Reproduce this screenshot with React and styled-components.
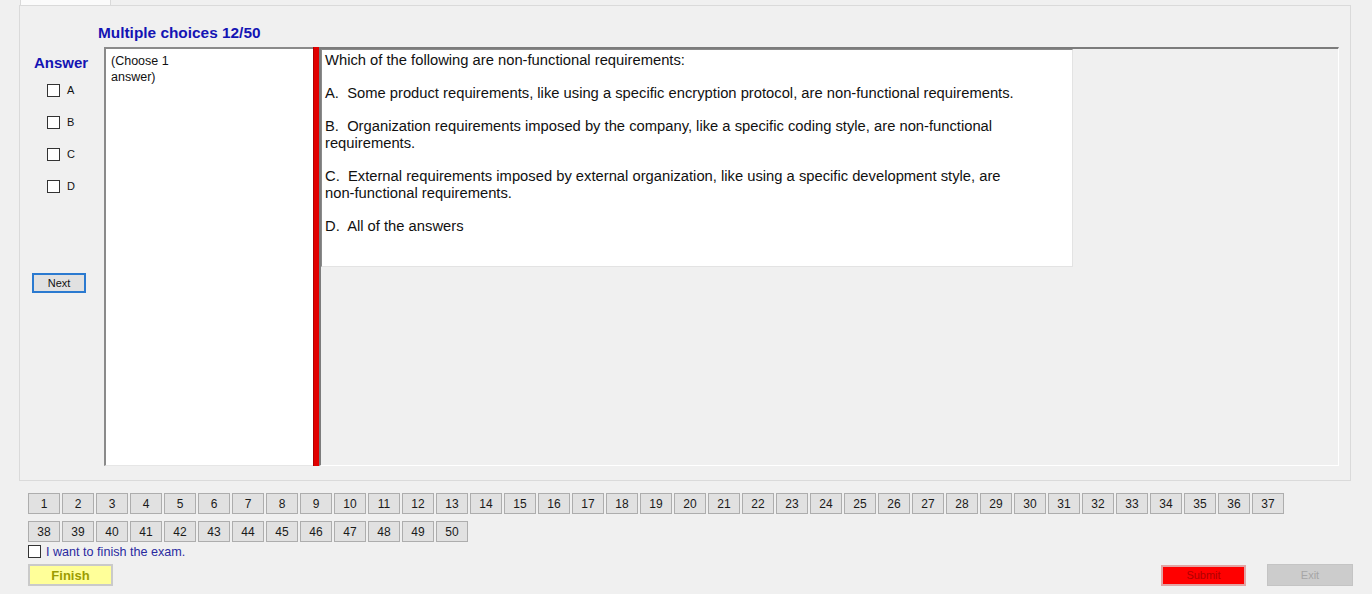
import React, { useState } from 'react';
import styled, { createGlobalStyle } from 'styled-components';

// --- Global ---
const GlobalStyle = createGlobalStyle`
  html, body { margin: 0; padding: 0; background: #f0f0f0; }
  body { font-family: 'Liberation Sans', Arial, sans-serif; }
  * { box-sizing: border-box; }
`;

const Screen = styled.div`
  width: 1372px;
  height: 594px;
  overflow: hidden;
  background: #f0f0f0;
  display: flex;
  flex-direction: column;
`;

// --- Tab control ---
const TabStrip = styled.div`
  height: 5px;
  padding-left: 20px;
  display: flex;
`;

const Tab = styled.div`
  width: 91px;
  height: 6px;
  background: #fbfbfb;
  border-left: 1px solid #d9d9d9;
  border-right: 1px solid #d9d9d9;
`;

const TabPage = styled.div`
  margin-left: 19px;
  width: 1332px;
  height: 476px;
  border: 1px solid #dadada;
  padding: 18px 11px 14px 0;
  display: flex;
  flex-direction: column;
`;

const Title = styled.div`
  margin-left: 78px;
  height: 17px;
  line-height: 17px;
  font-size: 15.4px;
  font-weight: 700;
  color: #1414b4;
`;

const MainRow = styled.div`
  margin-top: 6px;
  height: 419px;
  display: flex;
`;

// --- Answer column ---
const AnswerCol = styled.div`
  width: 84px;
  padding-left: 12px;
  display: flex;
  flex-direction: column;
`;

const AnswerLabel = styled.div`
  margin: 7px 0 3px 2px;
  height: 17px;
  line-height: 17px;
  font-size: 15px;
  font-weight: 700;
  color: #1414b4;
`;

const OptionRow = styled.label`
  height: 32px;
  padding-left: 15px;
  display: flex;
  align-items: center;
  gap: 7px;
  font-size: 11px;
  color: #111;
`;

const Box = styled.input.attrs({ type: 'checkbox' })`
  appearance: none;
  margin: 0;
  width: 13px;
  height: 13px;
  flex: none;
  background: #fff;
  border: 1px solid #333;
  &:checked { background: #fff radial-gradient(circle, #333 30%, transparent 32%); }
`;

const NextButton = styled.button`
  margin-top: 71px;
  width: 54px;
  height: 20px;
  padding: 0;
  background: #e1e1e1;
  border: 2px solid #2b7ad0;
  font-family: inherit;
  font-size: 11px;
  color: #111;
`;

// --- Choose box, red bar, question panel ---
const ChooseBox = styled.div`
  width: 209px;
  background: #fff;
  border-top: 2px solid #8a8a8a;
  border-left: 2px solid #8a8a8a;
  border-bottom: 1px solid #e6e6e6;
  padding: 5px 0 0 5px;
  font-size: 12.5px;
  line-height: 15.5px;
  color: #111;
`;

const RedBar = styled.div`
  width: 6px;
  background: #e10000;
  border-left: 1px solid #b00000;
`;

const QuestionPanel = styled.div`
  width: 1020px;
  border-top: 2px solid #7c7c7c;
  border-left: 2px solid #7c7c7c;
  border-right: 1px solid #fff;
  border-bottom: 1px solid #fff;
`;

const QuestionText = styled.div`
  width: 752px;
  height: 218px;
  background: #fff;
  border-top: 1px solid #8a8a8a;
  border-left: 1px solid #8a8a8a;
  border-right: 1px solid #e3e3e3;
  border-bottom: 1px solid #e3e3e3;
  padding: 2px 0 0 3px;
  font-size: 14.75px;
  line-height: 16.6px;
  color: #111;
  white-space: nowrap;

  p { margin: 0 0 16.6px; }
`;

// --- Navigation ---
const NavGrid = styled.div`
  margin: 12px 0 0 28px;
  width: 1260px;
  display: flex;
  flex-wrap: wrap;
  gap: 7px 2px;
`;

const NumButton = styled.button`
  width: 32px;
  height: 21px;
  padding: 0;
  background: #e1e1e1;
  border: 1px solid #adadad;
  font-family: inherit;
  font-size: 12px;
  color: #1a1a1a;
`;

const ConfirmRow = styled.label`
  margin: 2px 0 0 28px;
  height: 15px;
  display: flex;
  align-items: center;
  gap: 5px;
  font-size: 12.6px;
  color: #2a2aa0;
`;

const BottomRow = styled.div`
  margin-top: 5px;
  padding: 0 19px 0 28px;
  display: flex;
  justify-content: space-between;
  align-items: center;
`;

const FinishButton = styled.button`
  width: 85px;
  height: 22px;
  padding: 0;
  background: #ffff99;
  border: 2px solid #cacaca;
  font-family: inherit;
  font-size: 13px;
  font-weight: 700;
  color: #9c9c00;
`;

const RightButtons = styled.div`
  display: flex;
  align-items: center;
  gap: 21px;
`;

const SubmitButton = styled.button`
  width: 85px;
  height: 21px;
  padding: 0;
  background: #ff0000;
  border: 2px solid #e2a4a4;
  font-family: inherit;
  font-size: 11px;
  color: #b00000;
`;

const ExitButton = styled.button`
  width: 86px;
  height: 22px;
  padding: 0;
  background: #cccccc;
  border: 1px solid #c4c4c4;
  font-family: inherit;
  font-size: 11px;
  color: #a6a6a6;
`;

const options = ['A', 'B', 'C', 'D'];
const numbers = Array.from({ length: 50 }, (_, i) => i + 1);

export default function App() {
  const [picked, setPicked] = useState({});
  const [confirm, setConfirm] = useState(false);

  return (
    <>
      <GlobalStyle />
      <Screen>
        <TabStrip><Tab /></TabStrip>
        <TabPage>
          <Title>Multiple choices 12/50</Title>
          <MainRow>
            <AnswerCol>
              <AnswerLabel>Answer</AnswerLabel>
              {options.map((o) => (
                <OptionRow key={o}>
                  <Box checked={!!picked[o]} onChange={() => setPicked({ ...picked, [o]: !picked[o] })} />
                  {o}
                </OptionRow>
              ))}
              <NextButton>Next</NextButton>
            </AnswerCol>
            <ChooseBox>(Choose 1<br />answer)</ChooseBox>
            <RedBar />
            <QuestionPanel>
              <QuestionText>
                <p>Which of the following are non-functional requirements:</p>
                <p>A.&nbsp; Some product requirements, like using a specific encryption protocol, are non-functional requirements.</p>
                <p>B.&nbsp; Organization requirements imposed by the company, like a specific coding style, are non-functional<br />requirements.</p>
                <p>C.&nbsp; External requirements imposed by external organization, like using a specific development style, are<br />non-functional requirements.</p>
                <p>D.&nbsp; All of the answers</p>
              </QuestionText>
            </QuestionPanel>
          </MainRow>
        </TabPage>
        <NavGrid>
          {numbers.map((n) => (
            <NumButton key={n}>{n}</NumButton>
          ))}
        </NavGrid>
        <ConfirmRow>
          <Box checked={confirm} onChange={() => setConfirm(!confirm)} />
          I want to finish the exam.
        </ConfirmRow>
        <BottomRow>
          <FinishButton>Finish</FinishButton>
          <RightButtons>
            <SubmitButton>Submit</SubmitButton>
            <ExitButton>Exit</ExitButton>
          </RightButtons>
        </BottomRow>
      </Screen>
    </>
  );
}
